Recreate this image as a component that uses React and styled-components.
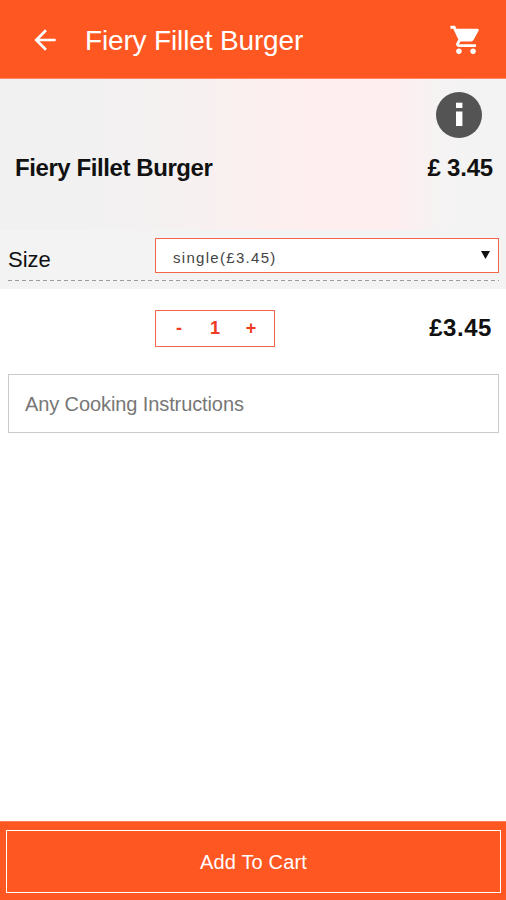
import React, { useState } from "react";
import styled, { createGlobalStyle } from "styled-components";
import { MdArrowBack, MdShoppingCart } from "react-icons/md";

const PRICE = 3.45;

const GlobalStyle = createGlobalStyle`
  * {
    box-sizing: border-box;
  }

  body {
    margin: 0;
    background: #fff;
    color: #111;
    font-family: "Liberation Sans", Arial, sans-serif;
  }

  button,
  input {
    font-family: inherit;
    border-radius: 0;
  }
`;

const Screen = styled.div`
  display: flex;
  flex-direction: column;
  height: 100vh;
`;

const Header = styled.header`
  display: flex;
  align-items: center;
  height: 79px;
  padding: 1px 23px 0 29px;
  background: #ff5722;
  border-bottom: 1px solid #ff8560;
  color: #fff;
`;

const IconButton = styled.button`
  display: flex;
  padding: 0;
  border: 0;
  background: none;
  color: inherit;
`;

const Title = styled.h1`
  flex: 1;
  margin: 2px 0 0 24px;
  font-size: 28px;
  font-weight: 400;
  letter-spacing: -0.15px;
  line-height: 32px;
`;

const Summary = styled.section`
  height: 151px;
  padding: 13px 13px 0 15px;
  background: linear-gradient(
    90deg,
    #f1f1f1 0%,
    #f3f1f1 28%,
    #f9f0f0 44%,
    #feeeef 62%,
    #feeef0 78%,
    #f5f3f3 87%,
    #f3f3f3 100%
  );
`;

const InfoBadge = styled.svg`
  display: block;
  width: 46px;
  height: 46px;
  margin: 0 11px 0 auto;
`;

const SummaryLine = styled.div`
  display: flex;
  justify-content: space-between;
  margin-top: 16px;
  font-size: 24px;
  font-weight: 700;
  line-height: 28px;
`;

const Name = styled.span`
  letter-spacing: -0.42px;
`;

const Price = styled.span`
  letter-spacing: -0.2px;
`;

const Options = styled.section`
  height: 59px;
  padding: 8px 7px 0 8px;
  background: #f3f3f3;
`;

const OptionRow = styled.div`
  display: flex;
  height: 43px;
  background: repeating-linear-gradient(
      90deg,
      #9c9c9c 0 4px,
      transparent 4px 7px
    )
    bottom / 100% 1px no-repeat;
`;

const OptionLabel = styled.span`
  width: 147px;
  padding-top: 9px;
  font-size: 22px;
  line-height: 26px;
`;

const Dropdown = styled.button`
  display: flex;
  flex: 1;
  align-items: center;
  justify-content: space-between;
  height: 35px;
  padding: 4px 8px 0 17px;
  border: 1px solid #f4664a;
  background: #fff;
  color: #444;
  font-size: 15px;
  letter-spacing: 1.3px;
`;

const Caret = styled.svg`
  width: 9px;
  height: 8px;
  margin-bottom: 6px;
`;

const QuantityRow = styled.div`
  display: flex;
  justify-content: space-between;
  padding: 21px 14px 0 155px;
`;

const Stepper = styled.div`
  display: flex;
  width: 120px;
  height: 37px;
  padding: 0 5px;
  border: 1px solid #f4664a;
  color: #f03a22;
  font-size: 18px;
  font-weight: 700;
  line-height: 35px;
  text-align: center;
`;

const Step = styled.button`
  flex: 1;
  padding: 0;
  border: 0;
  background: none;
  color: inherit;
  font-size: inherit;
  font-weight: inherit;
`;

const Count = styled.span`
  flex: 1;
`;

const Total = styled.span`
  font-size: 24px;
  font-weight: 700;
  letter-spacing: 0.55px;
  line-height: 36px;
`;

const Instructions = styled.input`
  height: 59px;
  margin: 27px 7px 0 8px;
  padding: 2px 16px 0;
  border: 1px solid #cacaca;
  font-size: 20px;
  letter-spacing: -0.1px;
  outline: none;

  &::placeholder {
    color: #777;
  }
`;

const Footer = styled.footer`
  height: 79px;
  margin-top: auto;
  padding: 8px 5px 7px 6px;
  border-top: 1px solid #ff7a55;
  background: #ff5722;
`;

const AddButton = styled.button`
  display: block;
  width: 100%;
  height: 63px;
  padding: 2px 0 0;
  border: 1px solid #fff;
  background: none;
  color: #fff;
  font-size: 20px;
  letter-spacing: 0.15px;
`;

function App() {
  const [count, setCount] = useState(1);

  return (
    <Screen>
      <GlobalStyle />
      <Header>
        <IconButton aria-label="Back">
          <MdArrowBack size={32} />
        </IconButton>
        <Title>Fiery Fillet Burger</Title>
        <IconButton aria-label="Cart">
          <MdShoppingCart size={34} />
        </IconButton>
      </Header>
      <Summary>
        <InfoBadge viewBox="0 0 46 46">
          <circle cx="23" cy="23" r="23" fill="#545454" />
          <rect x="20" y="10.7" width="6.4" height="5.3" fill="#fff" />
          <rect x="20" y="19.5" width="6.4" height="14.5" fill="#fff" />
        </InfoBadge>
        <SummaryLine>
          <Name>Fiery Fillet Burger</Name>
          <Price>£ {PRICE.toFixed(2)}</Price>
        </SummaryLine>
      </Summary>
      <Options>
        <OptionRow>
          <OptionLabel>Size</OptionLabel>
          <Dropdown>
            single(£{PRICE.toFixed(2)})
            <Caret viewBox="0 0 9 8">
              <path d="M0 0h9L4.5 8z" fill="#111" />
            </Caret>
          </Dropdown>
        </OptionRow>
      </Options>
      <QuantityRow>
        <Stepper>
          <Step onClick={() => setCount(Math.max(1, count - 1))}>-</Step>
          <Count>{count}</Count>
          <Step onClick={() => setCount(count + 1)}>+</Step>
        </Stepper>
        <Total>£{(PRICE * count).toFixed(2)}</Total>
      </QuantityRow>
      <Instructions placeholder="Any Cooking Instructions" />
      <Footer>
        <AddButton>Add To Cart</AddButton>
      </Footer>
    </Screen>
  );
}

export default App;
